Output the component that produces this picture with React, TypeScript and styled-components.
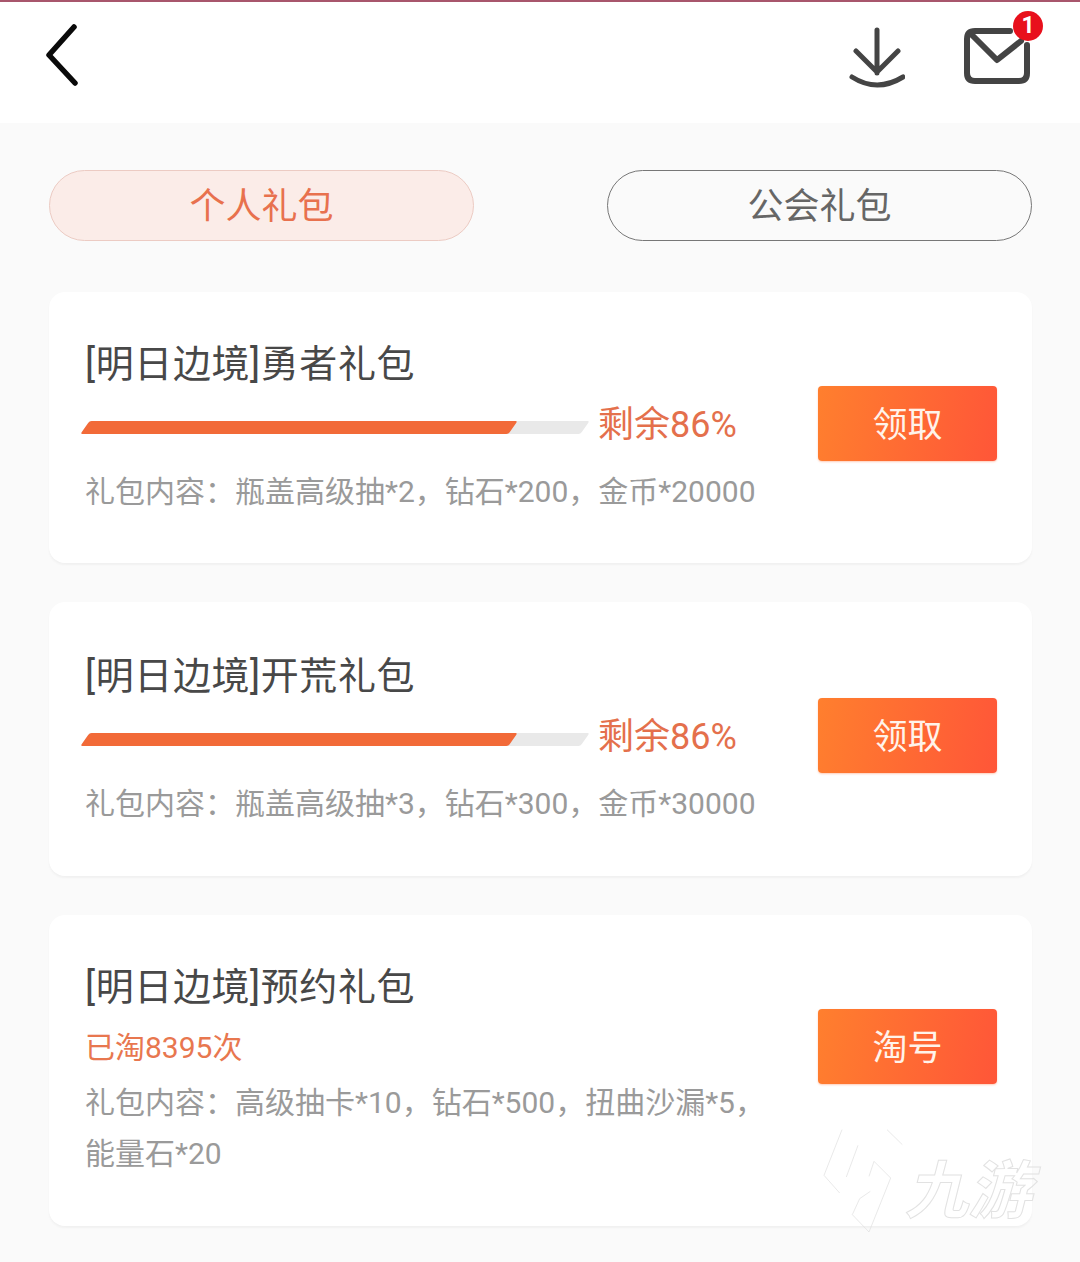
import React, { FC } from 'react'
import styled, { createGlobalStyle } from 'styled-components'

const GlobalStyle = createGlobalStyle`
  html, body {
    margin: 0;
    padding: 0;
    background: #fafafa;
  }
  * {
    box-sizing: border-box;
  }
`

type Gift = {
  id: string
  name: string
  remain?: string
  sold?: string
  content: string
  action: string
  top: number
  bottom: number
}

const gifts: Gift[] = [
  {
    id: 'brave',
    name: '[明日边境]勇者礼包',
    remain: '剩余86%',
    content: '礼包内容：瓶盖高级抽*2，钻石*200，金币*20000',
    action: '领取',
    top: 50,
    bottom: 46,
  },
  {
    id: 'wild',
    name: '[明日边境]开荒礼包',
    remain: '剩余86%',
    content: '礼包内容：瓶盖高级抽*3，钻石*300，金币*30000',
    action: '领取',
    top: 52,
    bottom: 47,
  },
  {
    id: 'reserve',
    name: '[明日边境]预约礼包',
    sold: '已淘8395次',
    content: '礼包内容：高级抽卡*10，钻石*500，扭曲沙漏*5，能量石*20',
    action: '淘号',
    top: 50,
    bottom: 47,
  },
]

const App: FC = () => {
  return (
    <Page>
      <GlobalStyle />
      <Header>
        <svg width="40" height="64" viewBox="0 0 40 64">
          <polyline
            points="32,3 7,31 33,59"
            fill="none"
            stroke="#0a0a0a"
            strokeWidth="5.5"
            strokeLinecap="round"
            strokeLinejoin="round"
          />
        </svg>
        <HeaderActions>
          <svg width="56" height="66" viewBox="0 0 56 66">
            <path
              d="M28 3V46M7 24L28 45L49 24M3 50Q28 66 54 50"
              fill="none"
              stroke="#444"
              strokeWidth="5"
              strokeLinecap="round"
              strokeLinejoin="round"
            />
          </svg>
          <Mail>
            <svg width="68" height="58" viewBox="0 0 68 58">
              <path
                d="M47 4H12Q4 4 4 12V46Q4 54 12 54H56Q64 54 64 46V18M10 9L34 33L58 14"
                fill="none"
                stroke="#444"
                strokeWidth="6"
                strokeLinecap="round"
                strokeLinejoin="round"
              />
            </svg>
            <Badge>1</Badge>
          </Mail>
        </HeaderActions>
      </Header>
      <Tabs>
        <Tab $active>个人礼包</Tab>
        <Tab>公会礼包</Tab>
      </Tabs>
      <List>
        {gifts.map((gift) => (
          <Card key={gift.id} $top={gift.top} $bottom={gift.bottom}>
            <CardBody>
              <Title>{gift.name}</Title>
              {gift.remain && (
                <ProgressRow>
                  <Track>
                    <Fill style={{ width: '85.6%' }} />
                  </Track>
                  <Remain>{gift.remain}</Remain>
                </ProgressRow>
              )}
              {gift.sold && <Sold>{gift.sold}</Sold>}
              <Content>{gift.content}</Content>
            </CardBody>
            <ActionButton>{gift.action}</ActionButton>
          </Card>
        ))}
      </List>
      <Watermark>
        <svg width="80" height="105" viewBox="130 380 240 315">
          <path
            d="M187 385L133 522L180 575M235 432L200 527M322 385L368 430M283 480L268 525M283 480L333 530L268 692L218 640L240 592L272 570"
            fill="none"
            stroke="#dedede"
            strokeWidth="2"
          />
        </svg>
        <WatermarkText>九游</WatermarkText>
      </Watermark>
    </Page>
  )
}

const Page = styled.div`
  position: relative;
  width: 1080px;
  height: 1262px;
  overflow: hidden;
  background: #fafafa;
  font-family: Roboto, 'Noto Sans CJK SC', sans-serif;
`

const Header = styled.header`
  display: flex;
  justify-content: space-between;
  align-items: flex-start;
  height: 123px;
  padding: 22px 49px 0 42px;
  background: #fff;
  border-top: 2px solid #a8566c;
`

const HeaderActions = styled.div`
  display: flex;
  align-items: flex-start;
  gap: 58px;
  padding-top: 3px;
`

const Mail = styled.div`
  position: relative;
`

const Badge = styled.span`
  position: absolute;
  top: -16px;
  right: -12px;
  width: 30px;
  height: 30px;
  border-radius: 50%;
  background: #e8101c;
  color: #fff;
  font-size: 23px;
  font-weight: 700;
  line-height: 30px;
  text-align: center;
`

const Tabs = styled.div`
  display: flex;
  justify-content: space-between;
  margin: 47px 48px 0 49px;
`

const Tab = styled.div<{ $active?: boolean }>`
  width: 425px;
  height: 71px;
  border: 1px solid ${(p) => (p.$active ? '#eccbc3' : '#777')};
  border-radius: 36px;
  background: ${(p) => (p.$active ? '#fbece8' : 'transparent')};
  color: ${(p) => (p.$active ? '#e8714e' : '#666')};
  font-size: 36px;
  line-height: 73px;
  text-align: center;
`

const List = styled.div`
  display: flex;
  flex-direction: column;
  gap: 39px;
  margin: 51px 48px 0 49px;
`

const Card = styled.section<{ $top: number; $bottom: number }>`
  display: flex;
  align-items: flex-start;
  gap: 33px;
  padding: ${(p) => `${p.$top}px 35px ${p.$bottom}px 36px`};
  background: #fff;
  border-radius: 16px;
  box-shadow: 0 2px 2px #f1f1f1;
`

const CardBody = styled.div`
  flex: 1;
  min-width: 0;
`

const Title = styled.div`
  color: #484848;
  font-size: 38px;
  letter-spacing: 0.6px;
  line-height: 44px;
`

const ProgressRow = styled.div`
  display: flex;
  align-items: center;
  gap: 13px;
  height: 44px;
  margin: 13px 0 23px;
`

const Track = styled.div`
  position: relative;
  flex: none;
  width: 500px;
  height: 13px;
  margin-top: 13px;
  background: #e9e9e9;
  border-radius: 2px;
  transform: skewX(-35deg);
`

const Fill = styled.div`
  height: 100%;
  background: #f26a38;
  border-radius: 2px;
`

const Remain = styled.span`
  color: #e4704c;
  font-size: 36px;
  white-space: nowrap;
`

const Sold = styled.div`
  margin-top: 17px;
  color: #e8774f;
  font-size: 30px;
  line-height: 44px;
`

const Content = styled.div`
  margin-top: 7px;
  color: #9a9a9a;
  font-size: 30px;
  line-height: 51px;
`

const ActionButton = styled.button`
  flex: none;
  width: 179px;
  height: 75px;
  margin-top: 44px;
  padding: 0 0 4px;
  border: none;
  border-radius: 4px;
  background: linear-gradient(100deg, #ff7f2e, #ff5638);
  box-shadow: 0 1px 2px rgba(255, 130, 80, 0.4);
  color: #fff3ea;
  font-family: inherit;
  font-size: 35px;
`

const Watermark = styled.div`
  position: absolute;
  left: 823px;
  top: 1128px;
  display: flex;
  align-items: flex-start;
  pointer-events: none;
`

const WatermarkText = styled.span`
  margin: 24px 0 0 2px;
  color: transparent;
  font-size: 63px;
  font-style: italic;
  font-weight: 700;
  line-height: 80px;
  -webkit-text-stroke: 1px #e2e2e2;
`

export default App
